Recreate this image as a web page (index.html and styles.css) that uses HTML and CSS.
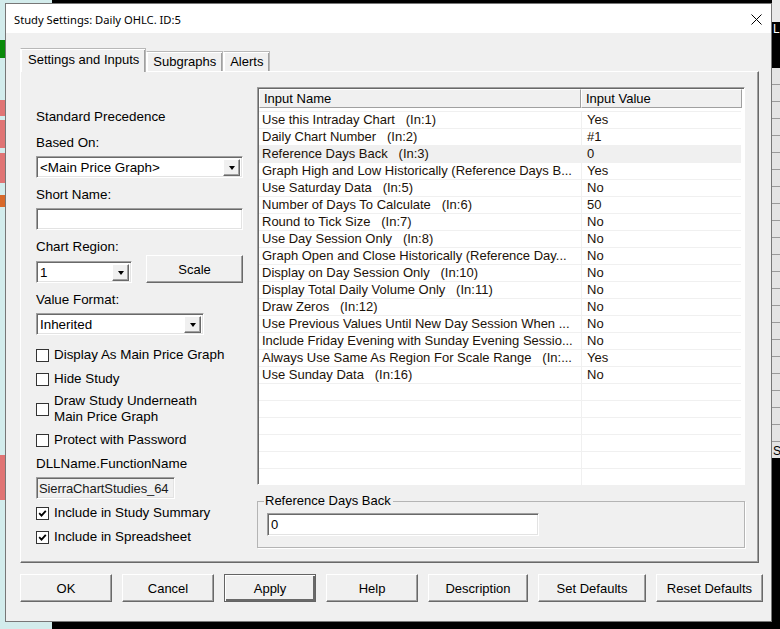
FILE: index.html
```html
<!DOCTYPE html>
<html lang="en">
<head>
    <meta charset="UTF-8">
    <title>Study Settings: Daily OHLC. ID:5</title>
    <link rel="stylesheet" href="styles.css">
</head>
<body>

    <!-- chart window behind the dialog -->
    <div class="desk-left">
        <div class="bar bar-green"></div>
        <div class="bar bar-red1"></div>
        <div class="bar bar-red2"></div>
        <div class="bar bar-red3"></div>
        <div class="bar bar-orange"></div>
        <div class="bar bar-red4"></div>
    </div>
    <div class="desk-right">
        <div class="desk-right-top"></div>
        <div class="desk-right-dark"><span>L</span></div>
        <div class="desk-right-rows"><span class="desk-s">S</span></div>
    </div>

    <div class="dialog">
        <div class="titlebar">
            <span class="title">Study Settings: Daily OHLC. ID:5</span>
            <svg class="close" width="11" height="11" viewBox="0 0 11 11">
                <path d="M0.5 0.5 L10.5 10.5 M10.5 0.5 L0.5 10.5" stroke="#000" stroke-width="1" fill="none"/>
            </svg>
        </div>

        <div class="dialog-body">
            <div class="tabs">
                <div class="tab tab-active">Settings and Inputs</div>
                <div class="tab">Subgraphs</div>
                <div class="tab">Alerts</div>
            </div>

            <div class="panel">
                <div class="left-col">
                    <div class="text">Standard Precedence</div>

                    <div class="text gap-10">Based On:</div>
                    <div class="combo gap-5" style="width: 207px">
                        <span class="combo-text">&lt;Main Price Graph&gt;</span>
                        <span class="combo-btn"><i class="arrow"></i></span>
                    </div>

                    <div class="text gap-9">Short Name:</div>
                    <div class="edit gap-5" style="width: 207px"></div>

                    <div class="text gap-9">Chart Region:</div>
                    <div class="region-row">
                        <div class="combo" style="width: 96px">
                            <span class="combo-text">1</span>
                            <span class="combo-btn"><i class="arrow"></i></span>
                        </div>
                        <button class="btn scale-btn">Scale</button>
                    </div>

                    <div class="text gap-9">Value Format:</div>
                    <div class="combo gap-5" style="width: 168px">
                        <span class="combo-text">Inherited</span>
                        <span class="combo-btn"><i class="arrow"></i></span>
                    </div>

                    <label class="check-row gap-12"><span class="box"></span>Display As Main Price Graph</label>
                    <label class="check-row gap-8"><span class="box"></span>Hide Study</label>
                    <label class="check-row gap-6"><span class="box"></span>Draw Study Underneath<br>Main Price Graph</label>
                    <label class="check-row gap-7"><span class="box"></span>Protect with Password</label>

                    <div class="text gap-8">DLLName.FunctionName</div>
                    <div class="edit edit-readonly gap-5" style="width: 139px">SierraChartStudies_64</div>

                    <label class="check-row gap-6"><span class="box"><svg width="9" height="9" viewBox="0 0 9 9"><path d="M1.2 4.2 L3.5 6.6 L7.8 1.8" stroke="#000" stroke-width="1.8" fill="none"/></svg></span>Include in Study Summary</label>
                    <label class="check-row gap-8"><span class="box"><svg width="9" height="9" viewBox="0 0 9 9"><path d="M1.2 4.2 L3.5 6.6 L7.8 1.8" stroke="#000" stroke-width="1.8" fill="none"/></svg></span>Include in Spreadsheet</label>
                </div>

                <div class="right-col">
                    <div class="grid">
                        <div class="grid-head">
                            <div class="head-cell">Input Name</div>
                            <div class="head-cell">Input Value</div>
                        </div>
                        <div class="grid-rows">
                            <div class="row"><div class="cell">Use this Intraday Chart   (In:1)</div><div class="cell">Yes</div></div>
                            <div class="row"><div class="cell">Daily Chart Number   (In:2)</div><div class="cell">#1</div></div>
                            <div class="row row-selected"><div class="cell">Reference Days Back   (In:3)</div><div class="cell">0</div></div>
                            <div class="row"><div class="cell">Graph High and Low Historically (Reference Days B...</div><div class="cell">Yes</div></div>
                            <div class="row"><div class="cell">Use Saturday Data   (In:5)</div><div class="cell">No</div></div>
                            <div class="row"><div class="cell">Number of Days To Calculate   (In:6)</div><div class="cell">50</div></div>
                            <div class="row"><div class="cell">Round to Tick Size   (In:7)</div><div class="cell">No</div></div>
                            <div class="row"><div class="cell">Use Day Session Only   (In:8)</div><div class="cell">No</div></div>
                            <div class="row"><div class="cell">Graph Open and Close Historically (Reference Day...</div><div class="cell">No</div></div>
                            <div class="row"><div class="cell">Display on Day Session Only   (In:10)</div><div class="cell">No</div></div>
                            <div class="row"><div class="cell">Display Total Daily Volume Only   (In:11)</div><div class="cell">No</div></div>
                            <div class="row"><div class="cell">Draw Zeros   (In:12)</div><div class="cell">No</div></div>
                            <div class="row"><div class="cell">Use Previous Values Until New Day Session When ...</div><div class="cell">No</div></div>
                            <div class="row"><div class="cell">Include Friday Evening with Sunday Evening Sessio...</div><div class="cell">No</div></div>
                            <div class="row"><div class="cell">Always Use Same As Region For Scale Range   (In:...</div><div class="cell">Yes</div></div>
                            <div class="row"><div class="cell">Use Sunday Data   (In:16)</div><div class="cell">No</div></div>
                            <div class="row"><div class="cell"></div><div class="cell"></div></div>
                            <div class="row"><div class="cell"></div><div class="cell"></div></div>
                            <div class="row"><div class="cell"></div><div class="cell"></div></div>
                            <div class="row"><div class="cell"></div><div class="cell"></div></div>
                            <div class="row"><div class="cell"></div><div class="cell"></div></div>
                            <div class="row"><div class="cell"></div><div class="cell"></div></div>
                        </div>
                    </div>

                    <fieldset class="group">
                        <legend>Reference Days Back</legend>
                        <div class="edit" style="width: 272px">0</div>
                    </fieldset>
                </div>
            </div>

            <div class="buttons">
                <button class="btn" style="width: 92px">OK</button>
                <button class="btn" style="width: 92px">Cancel</button>
                <button class="btn btn-default" style="width: 92px">Apply</button>
                <button class="btn" style="width: 92px">Help</button>
                <button class="btn" style="width: 100px">Description</button>
                <button class="btn" style="width: 108px">Set Defaults</button>
                <button class="btn" style="width: 107px">Reset Defaults</button>
            </div>
        </div>
    </div>

</body>
</html>
```

FILE: styles.css
```css
body {
    margin: 0;
    width: 780px;
    height: 629px;
    background-color: #000000;
    font-family: "Liberation Sans", Arial, sans-serif;
    font-size: 13px;
    color: #000000;
    position: relative;
    overflow: hidden;
}

/* ---- stuff behind the dialog ---- */
.desk-left {
    position: absolute;
    left: 0;
    top: 0;
    width: 52px;
    height: 629px;
    background-color: #d3ecec;
}
.bar {
    position: absolute;
    left: 0;
    width: 5px;
}
.bar-green { top: 40px; height: 18px; background-color: #0a8a0a; }
.bar-red1 { top: 100px; height: 16px; background-color: #e07474; }
.bar-red2 { top: 120px; height: 28px; background-color: #e07474; }
.bar-red3 { top: 153px; height: 30px; background-color: #e07474; }
.bar-orange { top: 195px; height: 12px; background-color: #d8692a; }
.bar-red4 { top: 455px; height: 45px; background-color: #e07474; }

.desk-right {
    position: absolute;
    left: 772px;
    top: 0;
    width: 8px;
    height: 629px;
    display: flex;
    flex-direction: column;
}
.desk-right-top { height: 22px; background-color: #e9e9e9; }
.desk-right-dark {
    height: 46px;
    background-color: #000000;
    color: #ffffff;
    font-size: 12px;
    padding-left: 1px;
}
.desk-right-rows {
    height: 390px;
    background: repeating-linear-gradient(#e4e4e4 0, #e4e4e4 16px, #9a9a9a 16px, #9a9a9a 17px);
    position: relative;
}
.desk-s {
    position: absolute;
    left: 1px;
    top: 376px;
    font-size: 12px;
}

/* ---- dialog window ---- */
.dialog {
    position: absolute;
    left: 5px;
    top: 3px;
    width: 767px;
    height: 619px;
    box-sizing: border-box;
    border: 1px solid #777777;
    background-color: #f0f0f0;
    display: flex;
    flex-direction: column;
}

.titlebar {
    height: 29px;
    background-color: #ffffff;
    display: flex;
    align-items: center;
    justify-content: space-between;
    padding: 0 9px 0 8px;
}
.title {
    font-family: "Noto Sans", "Open Sans", sans-serif;
    font-size: 11.2px;
    padding-top: 1px;
}
.close {
    display: block;
    margin-top: 1px;
}

.dialog-body {
    padding: 16px 0 0 14px;
}

/* ---- tabs ---- */
.tabs {
    display: flex;
    align-items: flex-end;
    height: 22px;
    position: relative;
    z-index: 1;
    padding-left: 1px;
}
.tab {
    height: 20px;
    box-sizing: border-box;
    padding: 2px 6px 0 6px;
    white-space: nowrap;
    border: 1px solid #b8b8b8;
    border-bottom: none;
    border-left-color: #ffffff;
    background-color: #f0f0f0;
    box-shadow: inset 1px 1px #ffffff, inset -1px 0 #a0a0a0;
}
.tab-active {
    height: 24px;
    margin-bottom: -1px;
    margin-left: -1px;
    padding: 3px 6px 0 7px;
}

.panel {
    width: 739px;
    height: 492px;
    box-sizing: border-box;
    border: 1px solid;
    border-color: #ffffff #696969 #696969 #ffffff;
    box-shadow: inset -1px -1px #a0a0a0;
    display: flex;
    padding: 15px 0 0 15px;
}

/* ---- left column ---- */
.left-col {
    width: 207px;
    padding-top: 22px;
    font-size: 13.4px;
}
.text {
    line-height: 16px;
    height: 16px;
    white-space: nowrap;
}
.gap-5 { margin-top: 5px; }
.gap-6 { margin-top: 6px; }
.gap-7 { margin-top: 7px; }
.gap-8 { margin-top: 8px; }
.gap-9 { margin-top: 9px; }
.gap-10 { margin-top: 10px; }
.gap-12 { margin-top: 12px; }

.combo,
.edit {
    height: 22px;
    box-sizing: border-box;
    background-color: #ffffff;
    border: 1px solid;
    border-color: #a0a0a0 #ffffff #ffffff #a0a0a0;
    box-shadow: inset 1px 1px #696969, inset -1px -1px #e3e3e3;
}
.combo {
    display: flex;
    align-items: center;
    justify-content: space-between;
    padding: 2px 2px 2px 3px;
}
.combo-text {
    padding-top: 1px;
}
.combo-btn {
    width: 17px;
    height: 17px;
    box-sizing: border-box;
    background-color: #f0f0f0;
    border: 1px solid;
    border-color: #ffffff #696969 #696969 #ffffff;
    box-shadow: inset -1px -1px #a0a0a0;
    display: flex;
    align-items: center;
    justify-content: center;
}
.arrow {
    width: 0;
    height: 0;
    border-left: 3.5px solid transparent;
    border-right: 3.5px solid transparent;
    border-top: 4px solid #000000;
    margin-top: 1px;
}
.edit {
    padding: 3px 3px 0 3px;
    line-height: 16px;
    white-space: nowrap;
    overflow: hidden;
}
.edit-readonly {
    background-color: #f0f0f0;
    color: #1a1a1a;
    font-size: 13px;
    padding-left: 2px;
    padding-right: 1px;
    letter-spacing: -0.1px;
}

.region-row {
    display: flex;
    align-items: flex-end;
    justify-content: space-between;
}
.scale-btn {
    width: 97px;
    height: 27px;
    font-size: 13.4px;
}

.check-row {
    display: flex;
    align-items: center;
    line-height: 16px;
    white-space: nowrap;
}
.box {
    width: 13px;
    height: 13px;
    box-sizing: border-box;
    border: 1px solid #333333;
    background-color: #ffffff;
    margin-right: 5px;
    flex-shrink: 0;
    display: flex;
    align-items: center;
    justify-content: center;
}
.box svg {
    display: block;
}

/* ---- right column ---- */
.right-col {
    margin-left: 14px;
    width: 488px;
}

.grid {
    height: 398px;
    box-sizing: border-box;
    border: 1px solid;
    border-color: #a0a0a0 #ffffff #ffffff #a0a0a0;
    box-shadow: inset 1px 1px #696969;
    background-color: #ffffff;
    padding: 1px 3px 0 1px;
}
.grid-head {
    display: grid;
    grid-template-columns: 322px 161px;
    height: 19px;
    margin-bottom: 3px;
}
.head-cell {
    background-color: #f0f0f0;
    border: 1px solid;
    border-color: #ffffff #a0a0a0 #a0a0a0 #ffffff;
    padding: 1px 0 0 4px;
    line-height: 16px;
}
.row {
    display: grid;
    grid-template-columns: 322px 161px;
    height: 17px;
    box-sizing: border-box;
    border-top: 1px solid #f0f0f0;
}
.cell {
    padding-left: 3px;
    line-height: 16px;
    white-space: pre;
    overflow: hidden;
    color: #1c1208;
}
.cell + .cell {
    border-left: 1px solid #f0f0f0;
    padding-left: 5px;
}
.row-selected {
    background-color: #f0f0f0;
}

.group {
    margin: 8px 0 0 0;
    padding: 4px 9px 0 9px;
    height: 55px;
    box-sizing: border-box;
    border: 1px solid #b4b4b4;
    box-shadow: 1px 1px #ffffff;
    min-width: 0;
}
.group legend {
    padding: 0 2px 0 1px;
    margin-left: -3px;
    line-height: 16px;
}
.group .edit {
    height: 23px;
}

/* ---- buttons ---- */
.btn {
    font-family: "Liberation Sans", Arial, sans-serif;
    font-size: 13px;
    color: #000000;
    background-color: #f0f0f0;
    border: 1px solid;
    border-color: #ffffff #696969 #696969 #ffffff;
    box-shadow: inset -1px -1px #a0a0a0;
    padding: 0;
    height: 28px;
    box-sizing: border-box;
}
.btn-default {
    border: 1px solid #646464;
    box-shadow: inset 1px 1px #ffffff, inset -2px -2px #696969;
}

.buttons {
    display: flex;
    gap: 10px;
    margin-top: 11px;
}
```
